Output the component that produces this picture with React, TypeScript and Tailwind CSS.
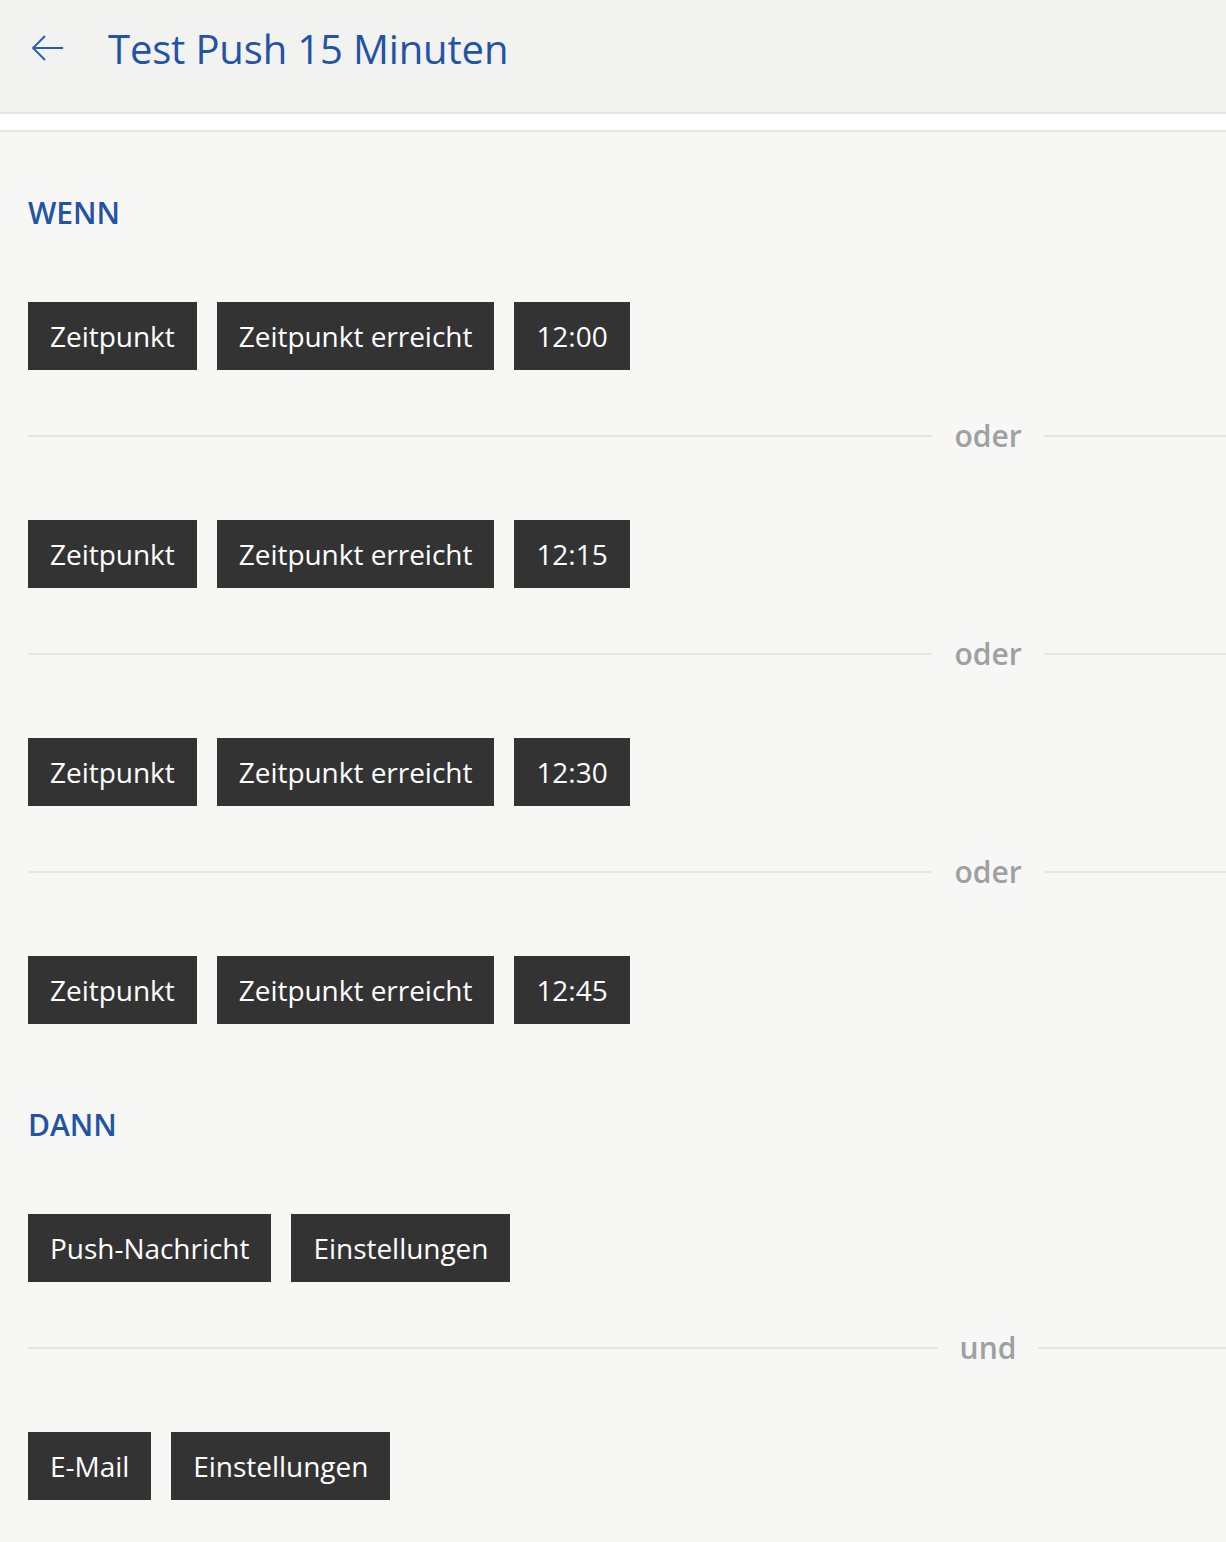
import { Fragment } from 'react'

type Rule = string[]

const conditions: Rule[] = [
  ['Zeitpunkt', 'Zeitpunkt erreicht', '12:00'],
  ['Zeitpunkt', 'Zeitpunkt erreicht', '12:15'],
  ['Zeitpunkt', 'Zeitpunkt erreicht', '12:30'],
  ['Zeitpunkt', 'Zeitpunkt erreicht', '12:45'],
]

const actions: Rule[] = [
  ['Push-Nachricht', 'Einstellungen'],
  ['E-Mail', 'Einstellungen'],
]

function Chips({ items }: { items: string[] }) {
  return (
    <div className="flex gap-[20px]">
      {items.map((item, i) => (
        <div
          key={i}
          className="h-[68px] flex items-center px-[22px] bg-[#333333] text-white text-[28px] leading-none tracking-[-0.03px]"
        >
          {item}
        </div>
      ))}
    </div>
  )
}

function Separator({ label }: { label: string }) {
  return (
    <div className="flex items-center h-[40px] mt-[46px] mb-[64px]">
      <div className="flex-1 h-[2px] bg-[#e6e6e3]" />
      <div className="w-[476px] flex items-center">
        <div className="flex-1 h-[2px] bg-[#e6e6e3]" />
        <span className="px-[22px] text-[30px] font-semibold text-[#9da1a2] leading-[40px]">
          {label}
        </span>
        <div className="flex-1 h-[2px] bg-[#e6e6e3]" />
      </div>
    </div>
  )
}

function Section({ title, rules, joiner }: { title: string, rules: Rule[], joiner: string }) {
  return (
    <div>
      <h2 className="text-[30px] leading-[40px] font-semibold text-[#2353a4] mb-[69px]">
        {title}
      </h2>
      {rules.map((rule, i) => (
        <Fragment key={i}>
          {i > 0 && <Separator label={joiner} />}
          <Chips items={rule} />
        </Fragment>
      ))}
    </div>
  )
}

export default function App() {
  return (
    <div
      className="min-h-[1542px] bg-[#f7f7f5]"
      style={{ fontFamily: '"Open Sans", "Noto Sans", sans-serif' }}
    >
      <header className="h-[114px] bg-[#f2f2f1] border-b-2 border-[#e6e6e3] flex items-center pl-[31px]">
        <svg width="34" height="26" viewBox="0 0 34 26" fill="none" className="shrink-0 -mt-[16px]">
          <path d="M32 13H2.5M14 1L2 13L14 25" stroke="#2a5aab" strokeWidth="1.8" />
        </svg>
        <h1 className="ml-[43px] text-[40px] leading-none text-[#2353a4] tracking-[-0.15px] -mt-[14px]">
          Test Push 15 Minuten
        </h1>
      </header>
      <div className="h-[18px] bg-white border-b-2 border-[#e6e6e3]" />
      <main className="pl-[28px] pt-[61px] pb-[42px]">
        <Section title="WENN" rules={conditions} joiner="oder" />
        <div className="h-[81px]" />
        <Section title="DANN" rules={actions} joiner="und" />
      </main>
    </div>
  )
}
